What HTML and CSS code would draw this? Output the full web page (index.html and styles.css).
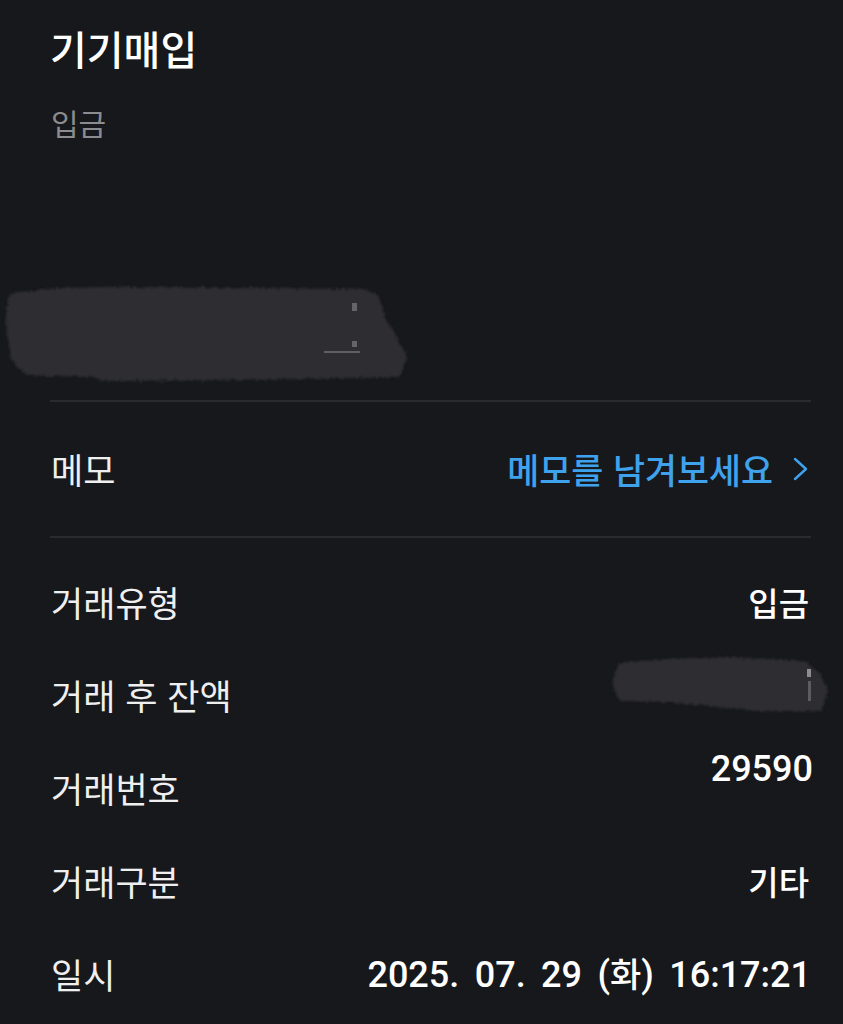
FILE: index.html
```html
<!DOCTYPE html>
<html lang="ko">
<head>
<meta charset="utf-8">
<title>기기매입</title>
<link rel="stylesheet" href="styles.css">
</head>
<body>
<main class="page">
  <header class="head">
    <h1 class="title">기기매입</h1>
    <p class="subtitle">입금</p>
    <div class="amount">
      <svg class="redact redact--amount" width="412" height="104" viewBox="0 0 412 104" aria-hidden="true">
        <defs>
          <filter id="rough1" x="-5%" y="-15%" width="110%" height="130%">
            <feTurbulence type="fractalNoise" baseFrequency="0.35" numOctaves="2" seed="3" result="n"/>
            <feDisplacementMap in="SourceGraphic" in2="n" scale="7" xChannelSelector="R" yChannelSelector="G" result="d"/>
            <feGaussianBlur in="d" stdDeviation="0.8"/>
          </filter>
        </defs>
        <path filter="url(#rough1)" fill="#2d2e30" d="M8,12 L60,7 L120,6 L250,7 L360,8 L376,14 L384,38 L396,60 L405,76 L398,96 L240,99 L100,100 L90,96 L25,94 L10,80 L5,55 L4,30 Z"/>
        <rect x="350" y="22" width="5" height="8" fill="#8a8b8d" opacity="0.6"/>
        <rect x="350" y="60" width="5" height="6" fill="#8a8b8d" opacity="0.6"/>
        <rect x="322" y="70" width="36" height="2" fill="#9a9b9d" opacity="0.45"/>
      </svg>
    </div>
  </header>

  <div class="divider"></div>

  <section class="memo">
    <span class="label">메모</span>
    <a class="memo-link" href="#">메모를 남겨보세요
      <svg class="chevron" width="16" height="24" viewBox="0 0 16 24" aria-hidden="true"><polyline points="2,2 13,12 2,22" fill="none" stroke="#3fa2ec" stroke-width="2.4" stroke-linecap="round" stroke-linejoin="round"/></svg>
    </a>
  </section>

  <div class="divider"></div>

  <section class="details">
    <div class="row">
      <span class="label">거래유형</span>
      <span class="value">입금</span>
    </div>
    <div class="row">
      <span class="label">거래 후 잔액</span>
      <svg class="redact redact--balance" width="222" height="62" viewBox="0 0 222 62" aria-hidden="true">
        <defs>
          <filter id="rough2" x="-5%" y="-15%" width="110%" height="130%">
            <feTurbulence type="fractalNoise" baseFrequency="0.35" numOctaves="2" seed="7" result="n"/>
            <feDisplacementMap in="SourceGraphic" in2="n" scale="6" xChannelSelector="R" yChannelSelector="G" result="d"/>
            <feGaussianBlur in="d" stdDeviation="0.8"/>
          </filter>
        </defs>
        <path filter="url(#rough2)" fill="#2d2e30" d="M10,10 L60,6 L120,4 L196,8 L212,22 L219,38 L212,58 L150,58 L90,52 L50,49 L10,48 L3,30 Z"/>
        <rect x="198" y="16" width="4" height="8" fill="#b5b6b8" opacity="0.7"/>
        <rect x="199" y="28" width="3" height="20" fill="#8a8b8d" opacity="0.5"/>
      </svg>
    </div>
    <div class="row">
      <span class="label">거래번호</span>
      <span class="value value--num value--raised">29590</span>
    </div>
    <div class="row">
      <span class="label">거래구분</span>
      <span class="value">기타</span>
    </div>
    <div class="row">
      <span class="label">일시</span>
      <span class="value value--num value--date">2025. 07. 29 (<span class="ko">화</span>) 16:17:21</span>
    </div>
  </section>
</main>
</body>
</html>
```

FILE: styles.css
```css
html, body {
  margin: 0;
  padding: 0;
  background: #17181c;
}

body {
  font-family: "Noto Sans CJK KR", "Noto Sans", sans-serif;
  color: #f2f2f3;
  width: 843px;
  height: 1024px;
  overflow: hidden;
}

.page {
  padding: 25px 32px 0 50px;
}

.head {
  display: flex;
  flex-direction: column;
}

.title {
  margin: 0;
  font-size: 40px;
  line-height: 46px;
  font-weight: 500;
  color: #ffffff;
}

.subtitle {
  margin: 33px 0 0 1px;
  font-size: 30px;
  line-height: 36px;
  font-weight: 400;
  color: #8b8c90;
}

.amount {
  margin-top: 141px;
  margin-left: -48px;
  height: 104px;
  margin-bottom: 15px;
}

.redact {
  display: block;
}

.divider {
  height: 2px;
  background: #2a2b2f;
}

.memo {
  height: 134px;
  display: flex;
  align-items: center;
  justify-content: space-between;
}

.label {
  font-size: 35px;
  line-height: 40px;
  font-weight: 400;
  color: #efeff0;
  margin-left: 1px;
}

.memo-link {
  display: flex;
  align-items: center;
  gap: 20px;
  font-size: 34.8px;
  line-height: 40px;
  font-weight: 500;
  color: #3fa2ec;
  text-decoration: none;
}

.chevron {
  display: block;
  margin-right: 2px;
}

.details {
  padding-top: 17px;
}

.row {
  height: 93px;
  display: flex;
  align-items: center;
  justify-content: space-between;
}

.value {
  font-size: 33px;
  line-height: 40px;
  font-weight: 500;
  color: #ffffff;
  margin-right: 2px;
}

.value--num {
  font-family: "Roboto", "Noto Sans CJK KR", sans-serif;
  font-size: 36px;
  line-height: 40px;
  font-weight: 500;
  margin-right: 0;
}

.value--raised {
  margin-bottom: 38px;
  margin-right: -2px;
}

.value--date {
  word-spacing: 6.5px;
}

.ko {
  font-family: "Noto Sans CJK KR", sans-serif;
  font-size: 34px;
}

.redact--balance {
  margin-right: -20px;
  margin-bottom: 22px;
}
```
